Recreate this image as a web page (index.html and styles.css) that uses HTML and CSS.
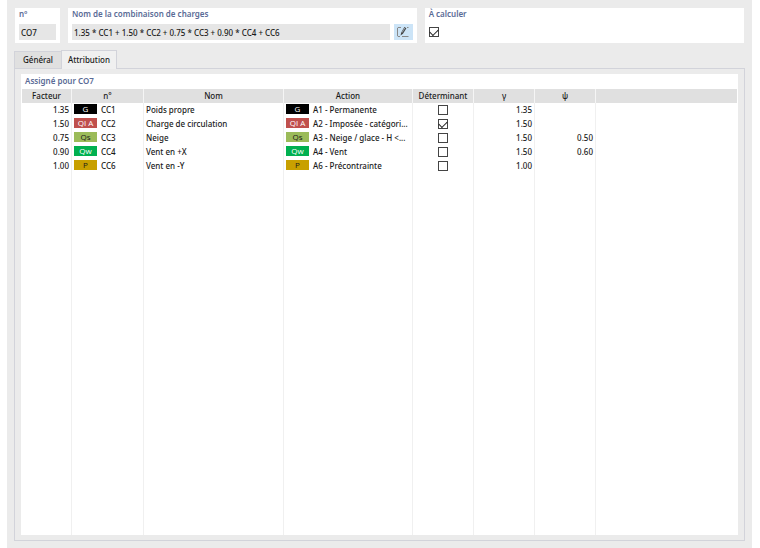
FILE: index.html
```html
<!DOCTYPE html>
<html lang="fr">
<head>
    <meta charset="UTF-8">
    <meta name="viewport" content="width=device-width, initial-scale=1.0">
    <title>Combinaisons de charges</title>
    <link rel="stylesheet" href="styles.css">
</head>
<body>

    <main class="dialog">

        <!-- Combination header -->
        <div class="top-row">
            <div class="card card-number">
                <label class="title" for="number">n°</label>
                <input class="field" type="text" id="number" value="CO7" readonly>
            </div>
            <div class="card card-name">
                <label class="title" for="name">Nom de la combinaison de charges</label>
                <div class="field-row">
                    <input class="field" type="text" id="name" value="1.35 * CC1 + 1.50 * CC2 + 0.75 * CC3 + 0.90 * CC4 + CC6" readonly>
                    <button class="edit-button" type="button" aria-label="Modifier le nom">
                        <svg width="14" height="12" viewBox="0 0 14 12" fill="none">
                            <path d="M5 1.5H2L1.5 2V10L2 10.5H4" stroke="#888" />
                            <path d="M4.5 9.5L5.2 6.5L8.4 1L10.4 2.2L7 7.8Z" fill="#444" />
                            <path d="M6 6.6L8.8 2" stroke="#cce4f7" stroke-width="0.6" />
                            <path d="M6 10.5H12.5M11 1.5H12.5" stroke="#888" />
                        </svg>
                    </button>
                </div>
            </div>
            <div class="card card-calculate">
                <label class="title" for="calculate">À calculer</label>
                <input class="check" type="checkbox" id="calculate" checked>
            </div>
        </div>

        <!-- Tabs -->
        <div class="tabs" role="tablist">
            <button class="tab" type="button" role="tab" aria-selected="false">Général</button>
            <button class="tab active" type="button" role="tab" aria-selected="true">Attribution</button>
        </div>

        <div class="panel" role="tabpanel">
            <section class="assigned">
                <h2 class="title">Assigné pour CO7</h2>
                <table class="grid">
                    <colgroup>
                        <col class="col-factor">
                        <col class="col-number">
                        <col class="col-name">
                        <col class="col-action">
                        <col class="col-value">
                        <col class="col-value">
                        <col class="col-value">
                        <col>
                    </colgroup>
                    <thead>
                        <tr>
                            <th>Facteur</th>
                            <th>n°</th>
                            <th>Nom</th>
                            <th>Action</th>
                            <th>Déterminant</th>
                            <th>γ</th>
                            <th>ψ</th>
                            <th></th>
                        </tr>
                    </thead>
                    <tbody>
                        <tr>
                            <td class="num">1.35</td>
                            <td><span class="badge badge-g">G</span>CC1</td>
                            <td>Poids propre</td>
                            <td><span class="badge badge-g">G</span>A1 - Permanente</td>
                            <td class="center"><input class="check" type="checkbox" aria-label="Déterminant CC1"></td>
                            <td class="num">1.35</td>
                            <td class="num"></td>
                            <td></td>
                        </tr>
                        <tr>
                            <td class="num">1.50</td>
                            <td><span class="badge badge-qi">QI A</span>CC2</td>
                            <td>Charge de circulation</td>
                            <td><span class="badge badge-qi">QI A</span>A2 - Imposée - catégori...</td>
                            <td class="center"><input class="check" type="checkbox" aria-label="Déterminant CC2" checked></td>
                            <td class="num">1.50</td>
                            <td class="num"></td>
                            <td></td>
                        </tr>
                        <tr>
                            <td class="num">0.75</td>
                            <td><span class="badge badge-qs">Qs</span>CC3</td>
                            <td>Neige</td>
                            <td><span class="badge badge-qs">Qs</span>A3 - Neige / glace - H &lt;...</td>
                            <td class="center"><input class="check" type="checkbox" aria-label="Déterminant CC3"></td>
                            <td class="num">1.50</td>
                            <td class="num">0.50</td>
                            <td></td>
                        </tr>
                        <tr>
                            <td class="num">0.90</td>
                            <td><span class="badge badge-qw">Qw</span>CC4</td>
                            <td>Vent en +X</td>
                            <td><span class="badge badge-qw">Qw</span>A4 - Vent</td>
                            <td class="center"><input class="check" type="checkbox" aria-label="Déterminant CC4"></td>
                            <td class="num">1.50</td>
                            <td class="num">0.60</td>
                            <td></td>
                        </tr>
                        <tr>
                            <td class="num">1.00</td>
                            <td><span class="badge badge-p">P</span>CC6</td>
                            <td>Vent en -Y</td>
                            <td><span class="badge badge-p">P</span>A6 - Précontrainte</td>
                            <td class="center"><input class="check" type="checkbox" aria-label="Déterminant CC6"></td>
                            <td class="num">1.00</td>
                            <td class="num"></td>
                            <td></td>
                        </tr>
                        <!-- Empty row, takes the remaining height -->
                        <tr class="filler">
                            <td></td><td></td><td></td><td></td><td></td><td></td><td></td><td></td>
                        </tr>
                    </tbody>
                </table>
            </section>
        </div>

    </main>

</body>
</html>
```
FILE: styles.css
```css
* {
    margin: 0;
    padding: 0;
    box-sizing: border-box;
}

body {
    font-family: 'Noto Sans', 'Open Sans', sans-serif;
    font-size: 8px;
    font-weight: 500;
    line-height: 12px;
    color: #1a1a1a;
    background: #fff;
}

input,
button {
    font: inherit;
    color: inherit;
    border: none;
}

.dialog {
    display: flex;
    flex-direction: column;
    min-height: 100vh;
    margin: 0 8px 0 7px;
    padding: 8px 7px 7px;
    background: #ebebeb;
}

/* Combination header */
.top-row {
    display: flex;
    gap: 8px;
    padding: 0 1px;
}

.card {
    display: flex;
    flex-direction: column;
    gap: 4px;
    height: 35px;
    padding: 0 4px;
    background: #fff;
}

.card-number {
    flex: 0 0 45px;
}

.card-name {
    flex: 349;
}

.card-calculate {
    flex: 319;
}

.title {
    font-size: 8px;
    line-height: 12px;
    font-weight: 600;
    color: #5a6b96;
}

.field-row {
    display: flex;
    gap: 4px;
}

.field {
    width: 100%;
    height: 16px;
    padding: 0 2px;
    background: #e6e6e6;
    outline: none;
}

.edit-button {
    display: flex;
    flex: 0 0 19px;
    justify-content: center;
    align-items: center;
    height: 16px;
    background: #cce4f7;
    cursor: pointer;
}

.check {
    display: inline-grid;
    place-content: center;
    width: 10px;
    height: 10px;
    appearance: none;
    border: 1px solid #444;
    background: #fff;
    vertical-align: middle;
}

.check:checked::before {
    content: '';
    width: 7px;
    height: 4px;
    margin-bottom: 2px;
    border-left: 1px solid #222;
    border-bottom: 1px solid #222;
    transform: rotate(-45deg);
}

.card-calculate .check {
    margin-top: 3px;
}

/* Tabs */
.tabs {
    display: flex;
    align-items: flex-end;
    height: 18px;
    margin-top: 7px;
}

.tab {
    height: 17px;
    padding: 0 8px;
    background: #e0e0e0;
    border: 1px solid #d2d3da;
    border-width: 1px 0 0 1px;
}

.tab.active {
    z-index: 1;
    height: 19px;
    padding: 0 6px;
    margin-bottom: -1px;
    background: #f0f0f0;
    border-width: 1px 1px 0;
}

.panel {
    display: flex;
    flex: 1;
    padding: 5px 6px;
    border: 1px solid #d2d3da;
}

.assigned {
    display: flex;
    flex: 1;
    flex-direction: column;
    padding: 1px 1px 0;
    background: #fff;
}

.assigned .title {
    height: 14px;
    padding-left: 3px;
}

/* Load case table */
.grid {
    flex: 1;
    width: 100%;
    table-layout: fixed;
    border-collapse: separate;
    border-spacing: 0;
}

.col-factor {
    width: 50px;
}

.col-number {
    width: 72px;
}

.col-name {
    width: 140px;
}

.col-action {
    width: 129px;
}

.col-value {
    width: 61px;
}

.grid th {
    height: 14px;
    font-weight: 500;
    background: #e0e0e0;
    border-right: 1px solid #f5f5f5;
}

.grid td {
    height: 14px;
    padding: 0 2px;
    white-space: nowrap;
    overflow: hidden;
    border-right: 1px solid #f0f0f0;
}

.grid th:last-child,
.grid td:last-child {
    border-right: none;
}

.grid .filler td {
    height: auto;
}

.grid .num {
    text-align: right;
}

.grid .center {
    text-align: center;
    line-height: 10px;
}

.badge {
    display: inline-block;
    width: 23px;
    height: 10px;
    margin-right: 4px;
    font-family: 'Open Sans', sans-serif;
    line-height: 10px;
    text-align: center;
    vertical-align: top;
}

.badge-g {
    color: #fff;
    background: #000;
}

.badge-qi {
    color: #fff;
    background: #c0504d;
}

.badge-qs {
    background: #9bbb59;
}

.badge-qw {
    color: #fff;
    background: #00b050;
}

.badge-p {
    background: #c8a000;
}
```
